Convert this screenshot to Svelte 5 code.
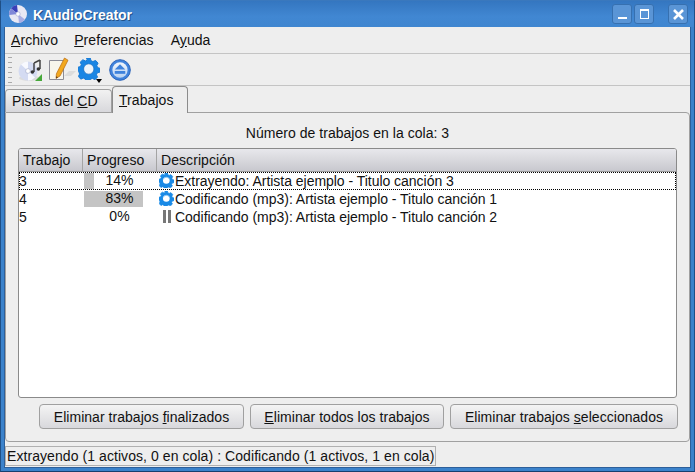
<script>
  const jobs = [
    { id: 3, pct: 14, icon: 'gear', text: 'Extrayendo: Artista ejemplo - Titulo canción 3', current: true },
    { id: 4, pct: 83, icon: 'gear', text: 'Codificando (mp3): Artista ejemplo - Titulo canción 1' },
    { id: 5, pct: 0, icon: 'pause', text: 'Codificando (mp3): Artista ejemplo - Titulo canción 2' }
  ];
  // chunky cog outline, 8 rounded teeth
  const gear = 'M7 0h3l.6 2.2 1.6.7L14.4 2l2 2.2-1 2 .6 1.6 2 .7v3l-2.2.6-.7 1.6.9 2-2.2 2-2-1-1.6.6-.7 2h-3l-.6-2.2-1.6-.7-2 .9-2-2.2 1-2L.6 11 -.2 10.4V7.6L2 7l.7-1.6-.9-2 2.2-2 2 1L7.6 1.8z';
</script>

{#snippet gearIcon()}
  <svg width="15" height="15" viewBox="0 0 18 18" class="rowgear">
    <path d={gear} fill="#1a8ae6" stroke="#1a8ae6" stroke-width="1" stroke-linejoin="round" />
    <circle cx="8.8" cy="9" r="4" fill="#fff" />
    <path d="M5 7.5a4.2 4.2 0 0 1 7.6 0" fill="none" stroke="#8fc8f4" stroke-width="1.2" />
  </svg>
{/snippet}

<div class="window">
  <header class="titlebar">
    <svg width="20" height="20" viewBox="0 0 20 20" class="appicon">
      <circle cx="10" cy="10" r="9" fill="#e8e8f4" />
      <path d="M10 10L3 4.5A9 9 0 0 1 9 1z" fill="#3a3fb8" />
      <path d="M10 10L1.2 11A9 9 0 0 1 3 4.5z" fill="#8088d8" />
      <path d="M10 10l7 5.5A9 9 0 0 1 11 19z" fill="#a9aee4" />
      <circle cx="10" cy="10" r="2.2" fill="#fff" stroke="#9096c8" stroke-width=".5" />
    </svg>
    <span class="title">KAudioCreator</span>
    <div class="winbtns">
      <button class="winbtn" aria-label="Minimizar"><i class="min"></i></button>
      <button class="winbtn" aria-label="Maximizar"><i class="max"></i></button>
      <button class="winbtn close" aria-label="Cerrar">
        <svg width="13" height="13" viewBox="0 0 13 13"><path d="M2 2l9 9M11 2l-9 9" stroke="#fff" stroke-width="2.6" /></svg>
      </button>
    </div>
  </header>

  <div class="body">
    <nav class="menubar">
      <span><u>A</u>rchivo</span>
      <span><u>P</u>referencias</span>
      <span class="help">A<u>y</u>uda</span>
    </nav>

    <div class="toolbar">
      <div class="grip"></div>
      <svg width="26" height="26" viewBox="0 0 26 26" class="tool cd">
        <ellipse cx="12" cy="21" rx="10" ry="3" fill="#dcdcdc" />
        <circle cx="11" cy="14" r="9.5" fill="#d4dbf2" />
        <path d="M11 14L4 7.5A9.5 9.5 0 0 1 11 4.5zM11 14l7 6.5a9.5 9.5 0 0 1-7 3z" fill="#f8f9fe" />
        <circle cx="11" cy="14" r="2.4" fill="#fff" stroke="#a0a8c8" stroke-width=".6" />
        <path d="M17 6v9M23 3v9M17 6l6-3" fill="none" stroke="#444" stroke-width="1.5" />
        <circle cx="15.4" cy="15" r="1.8" fill="#333" />
        <circle cx="21.4" cy="12" r="1.8" fill="#333" />
        <path d="M25 17v7h-7z" fill="#46a83a" />
      </svg>
      <svg width="30" height="26" viewBox="0 0 30 26" class="tool note">
        <path d="M16 19l5-5h7l-5 5z" fill="#dcdcdc" />
        <path d="M1.5 3.5h14v19h-14z" fill="#f8f6ec" stroke="#8c8c96" />
        <path d="M16.5 1l3.5 2.2L12 19l-4 2.4.4-4.6z" fill="#f2a81e" stroke="#b8680e" stroke-width=".7" />
        <path d="M8 21.4l.2-2.2 1.8 1.1z" fill="#5a3a14" />
      </svg>
      <div class="gearbtn">
        <svg width="22" height="22" viewBox="0 0 18 18">
          <path d={gear} fill="#1a86e4" stroke="#1a7ad4" stroke-width=".8" stroke-linejoin="round" />
          <circle cx="8.8" cy="9" r="4.2" fill="#eef5fb" stroke="#0e62b4" stroke-width=".5" />
        </svg>
        <i class="arrow"></i>
      </div>
      <svg width="22" height="22" viewBox="0 0 23 23" class="tool eject">
        <defs>
          <linearGradient id="ej" x1="0" y1="0" x2="0" y2="1">
            <stop offset="0" stop-color="#f2f6fc" />
            <stop offset="1" stop-color="#b8d2f2" />
          </linearGradient>
        </defs>
        <circle cx="11.5" cy="11.5" r="10.8" fill="#3f82dc" stroke="#2a62b8" />
        <circle cx="11.5" cy="11.5" r="8" fill="url(#ej)" />
        <path d="M11.5 5.5l5.5 5.5h-11z" fill="#3f82dc" />
        <path d="M6 12.5h11v3H6z" fill="#3f82dc" />
      </svg>
    </div>

    <div class="tabs">
      <div class="tab">Pistas del <u>C</u>D</div>
      <div class="tab active"><u>T</u>rabajos</div>
    </div>

    <section class="panel">
      <p class="count">Número de trabajos en la cola: 3</p>

      <div class="list">
        <div class="row head">
          <div class="c1">Trabajo</div>
          <div class="c2">Progreso</div>
          <div class="c3">Descripción</div>
        </div>
        {#each jobs as job}
          <div class="row item" class:current={job.current}>
            <div class="c1">{job.id}</div>
            <div class="c2">
              <div class="bar">
                <div class="fill" style="width: {job.pct}%"></div>
                <span>{job.pct}%</span>
              </div>
            </div>
            <div class="c3">
              {#if job.icon === 'gear'}
                {@render gearIcon()}
              {:else}
                <i class="pause"></i>
              {/if}
              <span>{job.text}</span>
            </div>
          </div>
        {/each}
      </div>

      <div class="actions">
        <button>Eliminar trabajos <u>f</u>inalizados</button>
        <button><u>E</u>liminar todos los trabajos</button>
        <button>Eliminar trabajos <u>s</u>eleccionados</button>
      </div>
    </section>

    <footer class="statusbar">
      <div class="status">Extrayendo (1 activos, 0 en cola) : Codificando (1 activos, 1 en cola)</div>
    </footer>
  </div>
</div>

<style>
  :global(body) {
    margin: 0;
    background: #eeeeee;
  }

  .window {
    width: 695px;
    height: 472px;
    box-sizing: border-box;
    display: flex;
    flex-direction: column;
    background: #3b82cb;
    border: 1px solid #1f4f86;
    border-top-color: #3a78bd;
    border-bottom-color: #173f6f;
    font-family: "Liberation Sans", sans-serif;
    font-size: 14px;
    letter-spacing: 0.07px;
    color: #111;
    overflow: hidden;
  }

  .titlebar {
    height: 26px;
    flex: none;
    display: flex;
    align-items: center;
    padding: 0 6px 0 6px;
    background: linear-gradient(#3476c0, #4187d2 60%, #3f86d0);
    color: #fff;
  }

  .appicon {
    margin-left: 1px;
  }

  .title {
    margin-left: 5px;
    padding-top: 1px;
    font-weight: bold;
    font-size: 14px;
    letter-spacing: -0.05px;
    text-shadow: 1px 1px 0 #1f4f86;
  }

  .winbtns {
    margin-left: auto;
    display: flex;
  }

  .winbtn {
    width: 20px;
    height: 20px;
    padding: 0;
    margin-left: 2px;
    display: flex;
    align-items: center;
    justify-content: center;
    background: #5a95d6;
    border: 1px solid #3670b0;
    border-radius: 3px;
  }

  .winbtn.close {
    margin-left: 14px;
  }

  .min {
    width: 9px;
    height: 2px;
    margin-top: 8px;
    background: #fff;
  }

  .max {
    width: 7px;
    height: 7px;
    border: 1px solid #fff;
    border-top-width: 2px;
  }

  .body {
    flex: 1;
    min-height: 0;
    margin: 0 3px 3px 3px;
    display: flex;
    flex-direction: column;
    background: #eeeeee;
    border: 1px solid #2d5f9a;
    border-top: none;
  }

  .menubar {
    height: 26px;
    flex: none;
    display: flex;
    align-items: center;
    gap: 16px;
    padding-left: 6px;
    border-bottom: 1px solid #c4c4c4;
  }

  .help {
    margin-left: 1px;
  }

  .toolbar {
    height: 31px;
    flex: none;
    display: flex;
    align-items: center;
    padding-left: 3px;
    border-bottom: 1px solid #c4c4c4;
  }

  .grip {
    width: 4px;
    height: 26px;
    margin-right: 5px;
    background: repeating-linear-gradient(#aaa 0 1px, transparent 1px 5px);
  }

  .tool {
    flex: none;
  }

  .note {
    margin-left: 5px;
  }

  .gearbtn {
    position: relative;
    width: 31px;
    height: 24px;
    box-sizing: border-box;
  }

  .arrow {
    position: absolute;
    left: 18px;
    bottom: -1px;
    border: 3.5px solid transparent;
    border-top: 4px solid #000;
    border-bottom: none;
  }

  .tabs {
    height: 26px;
    flex: none;
    display: flex;
    align-items: flex-end;
    position: relative;
    z-index: 1;
  }

  .tab {
    box-sizing: border-box;
    height: 23px;
    width: 107px;
    padding: 3px 0 0 6px;
    background: linear-gradient(#f2f2f2, #d8d8dc);
    border: 1px solid #a0a0a0;
    border-bottom: none;
    border-radius: 4px 4px 0 0;
  }

  .tab.active {
    height: 27px;
    width: 76px;
    margin-bottom: -1px;
    padding: 5px 0 0 6px;
    background: #eeeeee;
    border-color: #8c8c8c;
  }

  .panel {
    flex: 1;
    min-height: 0;
    display: flex;
    flex-direction: column;
    border: 1px solid #a0a0a0;
    border-radius: 0 4px 4px 4px;
  }

  .count {
    margin: 12px 0 7px;
    height: 16px;
    line-height: 16px;
    text-align: center;
    letter-spacing: 0.03px;
  }

  .list {
    flex: 1;
    margin: 0 12px;
    background: #fff;
    border: 1px solid #8a8a8a;
    border-radius: 3px;
    overflow: hidden;
  }

  .row {
    display: flex;
  }

  .head {
    height: 22px;
    align-items: center;
    background: linear-gradient(#e8e8ec, #c8c8ce);
    border-bottom: 1px solid #999;
  }

  .head > div {
    box-sizing: border-box;
    height: 100%;
    line-height: 23px;
    padding-left: 4px;
    border-right: 1px solid #a4a4a4;
  }

  .head .c3 {
    flex: 1;
    border-right: none;
  }

  .c1 {
    width: 64px;
    flex: none;
  }

  .c2 {
    width: 74px;
    flex: none;
  }

  .item {
    height: 18px;
    line-height: 18px;
  }

  .item .c1 {
    width: 65px;
    box-sizing: border-box;
  }

  .item .c2 {
    padding-right: 4px;
    box-sizing: border-box;
    width: 75px;
  }

  .current {
    outline: 1px dotted #000;
    outline-offset: -1px;
  }

  .bar {
    position: relative;
    height: 16px;
    margin-top: 1px;
    text-align: center;
    line-height: 14px;
  }

  .fill {
    position: absolute;
    inset: 0 auto 0 0;
    background: #c4c4c4;
  }

  .bar span {
    position: relative;
  }

  .item .c3 {
    display: flex;
    align-items: center;
    white-space: nowrap;
    letter-spacing: -0.03px;
  }

  .rowgear {
    flex: none;
    margin: -2px 1px 0 0;
  }

  .pause {
    flex: none;
    width: 8px;
    height: 13px;
    margin: -2px 4px 0;
    box-sizing: border-box;
    border-left: 3px solid #777;
    border-right: 3px solid #777;
  }

  .actions {
    height: 43px;
    flex: none;
    box-sizing: border-box;
    display: flex;
    justify-content: flex-end;
    align-items: flex-start;
    gap: 6px;
    padding: 6px 11px 0 0;
  }

  .actions button {
    height: 25px;
    padding: 0;
    font: inherit;
    letter-spacing: 0.04px;
    color: inherit;
    background: linear-gradient(#f4f4f4, #d8d8dc);
    border: 1px solid #a0a0a0;
    border-radius: 4px;
  }

  .actions button:nth-child(1) {
    width: 205px;
  }

  .actions button:nth-child(2) {
    width: 194px;
  }

  .actions button:nth-child(3) {
    width: 228px;
  }

  .statusbar {
    height: 25px;
    flex: none;
    display: flex;
    align-items: flex-end;
  }

  .status {
    height: 20px;
    line-height: 18px;
    box-sizing: border-box;
    padding: 0 1px;
    border: 1px solid #b0b0b0;
    white-space: nowrap;
    margin-bottom: 1px;
  }
</style>
